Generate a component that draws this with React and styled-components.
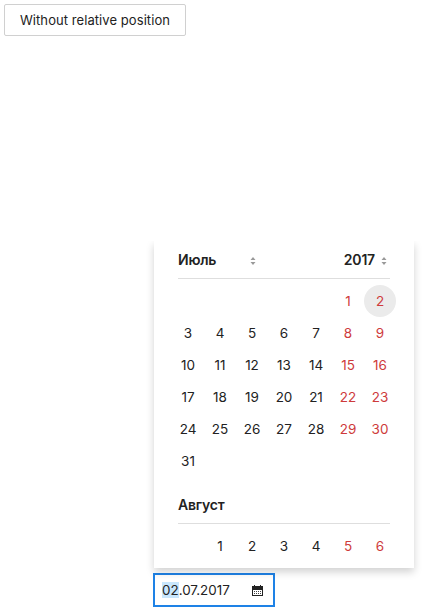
import React from 'react';
import styled, { createGlobalStyle } from 'styled-components';

const GlobalStyle = createGlobalStyle`
  * { box-sizing: border-box; }
  body {
    margin: 0;
    background: #fff;
    color: #222;
    font: 14px/20px Inter, 'Liberation Sans', sans-serif;
  }
`;

const Page = styled.main`
  height: 610px;
  padding: 4px;
  overflow: hidden;
`;

const Button = styled.button`
  display: block;
  width: 182px;
  height: 32px;
  padding: 0 0 1px;
  border: 1px solid #d0d0d0;
  border-radius: 2px;
  background: #fff;
  color: #222;
  font: inherit;
  font-size: 13px;
  letter-spacing: 0.07px;
  white-space: nowrap;
`;

const Picker = styled.section`
  width: 260px;
  margin: 205px 0 0 150px;
`;

const Calendar = styled.div`
  height: 327px;
  padding: 0 18px;
  background: #fff;
  box-shadow: 0 4px 8px rgba(0, 0, 0, 0.18);
  clip-path: inset(0 -10px -14px -10px);
`;

const MonthHeader = styled.header`
  display: flex;
  align-items: center;
  height: 38px;
  margin: 0 6px;
  border-bottom: 1px solid #dedede;
  font-size: 14px;
  font-weight: 600;
`;

const MonthName = styled.span`
  width: 72px;
  letter-spacing: -0.2px;
`;

const Year = styled.span`
  margin-left: auto;
  margin-right: 6px;
  letter-spacing: -0.2px;
`;

const SortIcon = styled.svg`
  display: block;
  width: 6px;
  height: 8px;
  margin-top: 3px;
  margin-right: ${p => p.$end || '0'};
  fill: #999;
`;

const Days = styled.div`
  display: grid;
  grid-template-columns: repeat(7, 32px);
  grid-auto-rows: 32px;
  padding-top: 6px;
`;

const Day = styled.span`
  display: flex;
  align-items: center;
  justify-content: center;
  border-radius: 50%;
  grid-column-start: ${p => p.$column || 'auto'};
  background: ${p => (p.$selected ? '#ebebeb' : 'transparent')};
  color: ${p => (p.$weekend ? '#ce3b3b' : '#222')};
  font-size: 13.5px;
`;

const NextMonth = styled.div`
  padding-top: 9px;
`;

const DateField = styled.div`
  display: flex;
  align-items: center;
  width: 122px;
  height: 34px;
  margin: 5px 0 0 -1px;
  padding: 0 10px 0 7px;
  border: 2px solid #1e82e6;
  background: #fff;
  font-size: 13.4px;
`;

const SelectedText = styled.span`
  background: #c8e6fc;
  line-height: 16px;
`;

const CalendarGlyph = styled.svg`
  display: block;
  width: 11px;
  height: 11px;
  margin-left: auto;
`;

function Sorter({ end }) {
  return (
    <SortIcon $end={end} viewBox="0 0 6 8">
      <path d="M3 0 5.5 3H.5zM3 8 .5 5h5z" />
    </SortIcon>
  );
}

function Month({ start, count, selected }) {
  return (
    <Days>
      {Array.from({ length: count }, (_, i) => (
        <Day
          key={i}
          $column={i === 0 ? start : undefined}
          $weekend={(i + start - 1) % 7 >= 5}
          $selected={i + 1 === selected}
        >
          {i + 1}
        </Day>
      ))}
    </Days>
  );
}

export default function App() {
  return (
    <>
      <GlobalStyle />
      <Page>
        <Button>Without relative position</Button>
        <Picker>
          <Calendar>
            <MonthHeader>
              <MonthName>Июль</MonthName>
              <Sorter />
              <Year>2017</Year>
              <Sorter end="3px" />
            </MonthHeader>
            <Month start={6} count={31} selected={2} />
            <NextMonth>
              <MonthHeader>
                <MonthName>Август</MonthName>
              </MonthHeader>
              <Month start={2} count={6} />
            </NextMonth>
          </Calendar>
          <DateField>
            <span><SelectedText>02</SelectedText>.07.2017</span>
            <CalendarGlyph viewBox="0 0 11 11">
              <path fill="#222" d="M2 0h1v1h5V0h1v1h2v10H0V1h2z" />
              <path fill="#fff" d="M1 5h9v5H1zM3 0h5v1H3z" />
              <path fill="#444" d="M2 6h1v1H2zm2 0h1v1H4zm2 0h1v1H6zm2 0h1v1H8zM2 8h1v1H2zm2 0h1v1H4zm2 0h1v1H6zm2 0h1v1H8z" />
            </CalendarGlyph>
          </DateField>
        </Picker>
      </Page>
    </>
  );
}
